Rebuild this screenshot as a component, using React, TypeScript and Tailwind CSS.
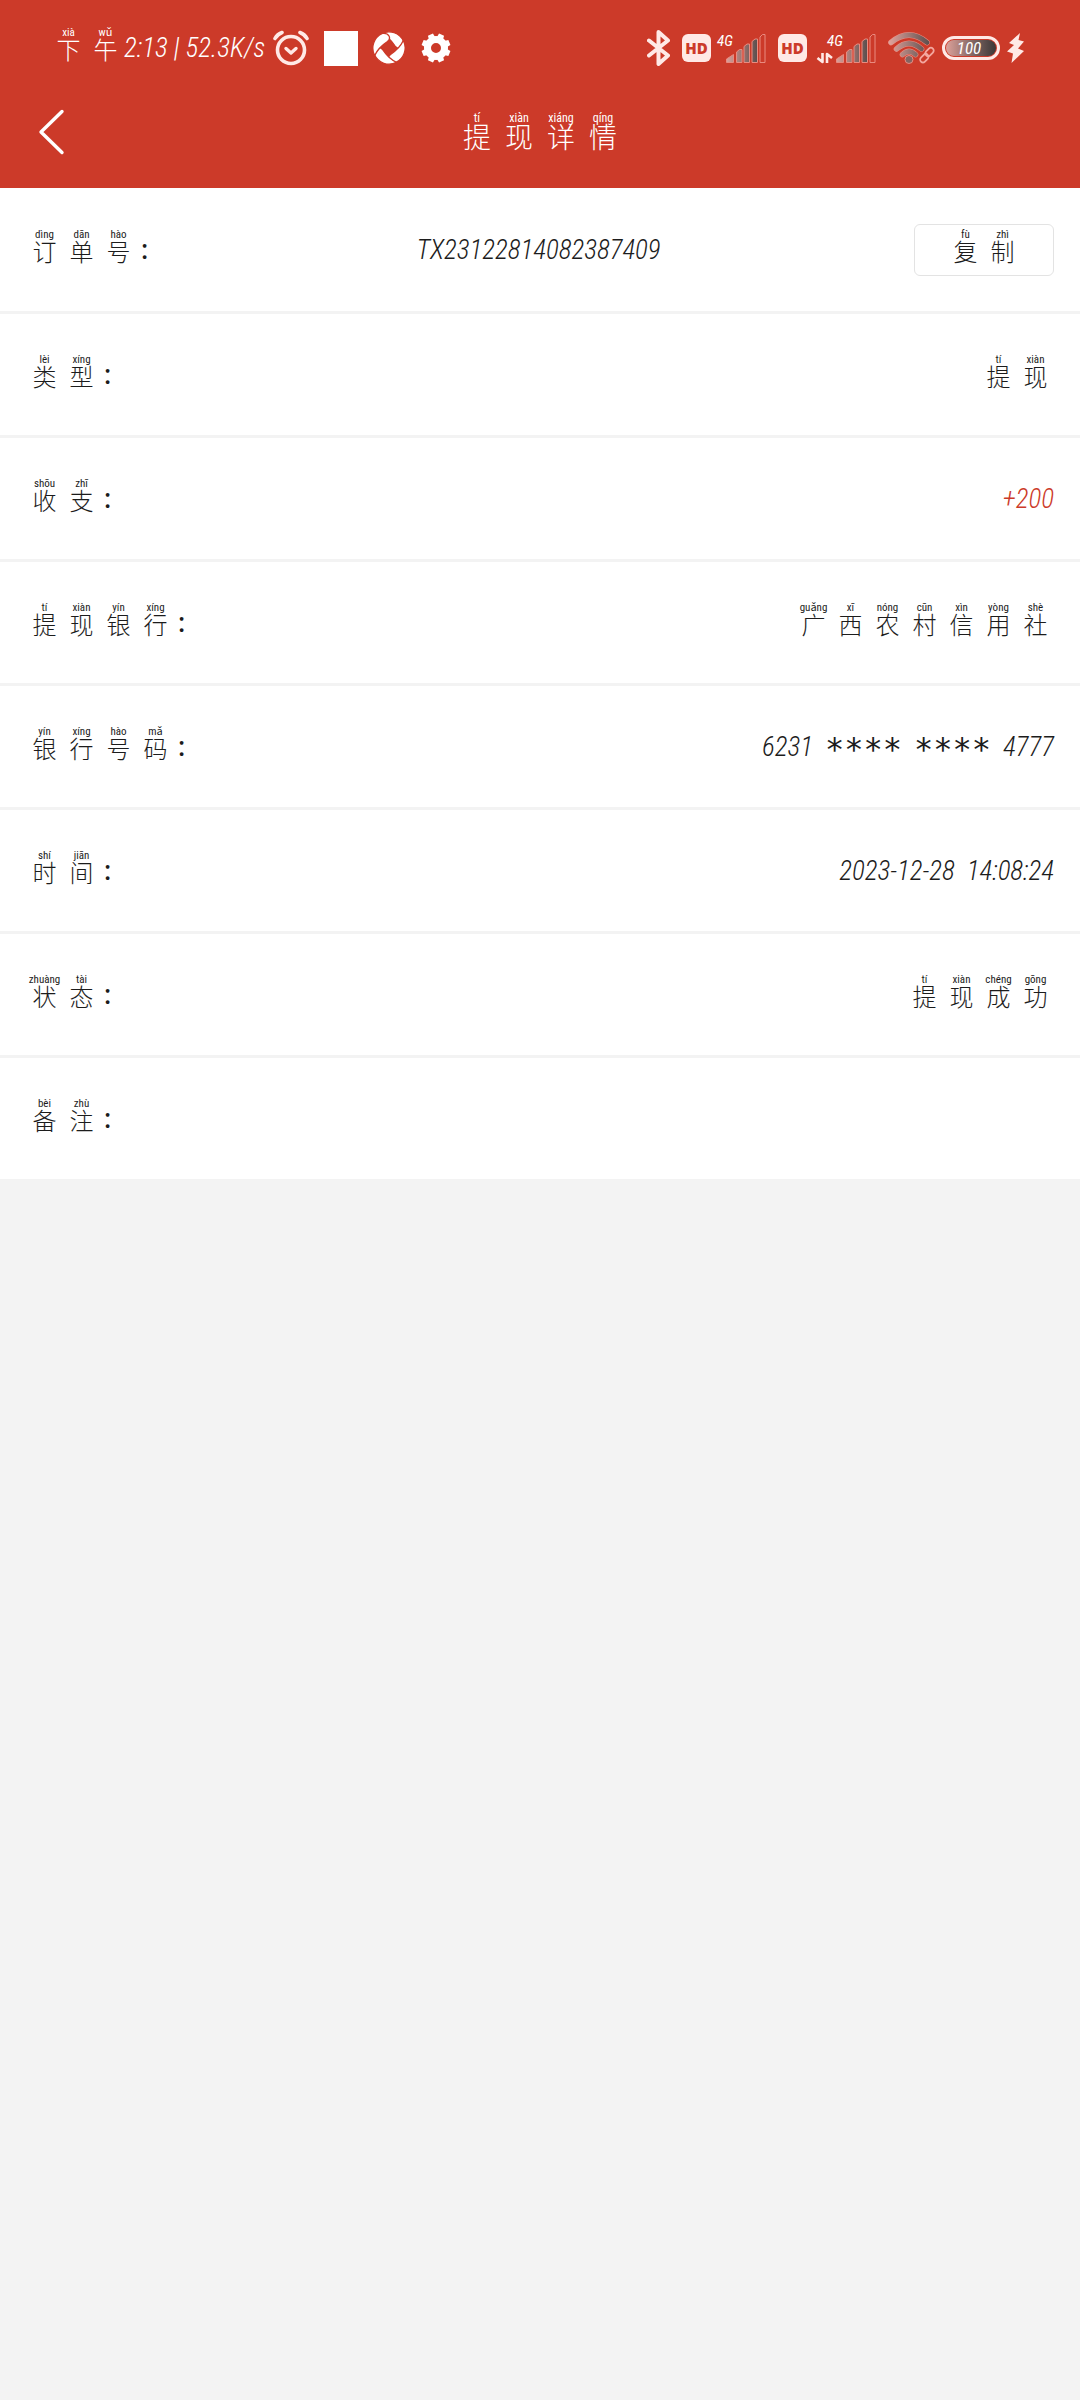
import React from "react";

type Syllable = [char: string, pinyin: string];

interface DetailRow {
  label: Syllable[];
  value?: React.ReactNode;
}

const Pinyin: React.FC<{ text: Syllable[]; large?: boolean }> = ({ text, large }) => (
  <span className="inline-flex pb-1">
    {text.map(([char, pinyin], index) => (
      <ruby key={index} className={`flex flex-col-reverse items-center ${large ? "w-[42px]" : "w-[37px]"}`}>
        <span className={large ? "text-[28px] leading-8" : "text-[24px] leading-[26px]"}>{char}</span>
        <rt className={`block leading-[10px] font-normal ${large ? "text-[12px]" : "text-[11px]"}`}>{pinyin}</rt>
      </ruby>
    ))}
  </span>
);

const AlarmIcon: React.FC = () => (
  <svg width="36" height="36" viewBox="0 0 36 36" fill="none" stroke="#ffe9e6" strokeLinecap="round" strokeLinejoin="round">
    <circle cx="18" cy="20" r="13.5" strokeWidth="3.6" />
    <path d="M13 18.5l5 4.5 5-4.5" strokeWidth="3.4" />
    <path d="M2 8.5Q4 4.5 9 2.5M34 8.5Q32 4.5 27 2.5" strokeWidth="3.6" />
  </svg>
);

const SwirlIcon: React.FC = () => (
  <svg width="32" height="34" viewBox="0 0 34 34" fill="#fff" stroke="#cc3a29" strokeWidth="1.4">
    {[0, 90, 180, 270].map((angle) => (
      <path key={angle} d="M9 1.8A17 17 0 0 1 32.5 10C33.5 17 27 20 23.5 15C20.5 10.5 17 5.5 9 1.8Z" transform={`rotate(${angle} 17 17)`} />
    ))}
  </svg>
);

const GearIcon: React.FC = () => (
  <svg width="32" height="32" viewBox="0 0 32 32">
    <circle cx="16" cy="16" r="8.5" fill="none" stroke="#fff" strokeWidth="7" />
    {[22.5, 67.5, 112.5, 157.5, 202.5, 247.5, 292.5, 337.5].map((angle) => (
      <path key={angle} d="M12.5 7L13.3 1.5H18.7L19.5 7Z" fill="#fff" transform={`rotate(${angle} 16 16)`} />
    ))}
  </svg>
);

const BluetoothIcon: React.FC = () => (
  <svg width="23" height="36" viewBox="0 0 23 36" fill="none" stroke="#ffe9e6" strokeWidth="4" strokeLinecap="round" strokeLinejoin="round">
    <path d="M2 10.5L21 25.5L11.5 34V2L21 10.5L2 25.5" />
  </svg>
);

const HdIcon: React.FC = () => (
  <span className="flex h-[28px] w-[29px] items-center justify-center rounded-md bg-[#ffe9e6] font-['Open_Sans',sans-serif] text-[15px] leading-none font-extrabold text-[#cc3a29]">
    HD
  </span>
);

const SignalIcon: React.FC<{ id: string; transfer?: boolean }> = ({ id, transfer }) => {
  const left = transfer ? 29 : 15;
  return (
    <svg width={transfer ? 69 : 55} height="32" viewBox={transfer ? "0 0 69 32" : "0 0 55 32"}>
      <defs>
        <linearGradient id={id} gradientUnits="userSpaceOnUse" x1="0" y1="0" x2="32" y2="0">
          <stop offset="0" stopColor="#dda19a" />
          <stop offset="1" stopColor="#5a4c4b" />
        </linearGradient>
      </defs>
      <text x={transfer ? 20 : 6} y="14" fill="#fff" className="font-['Roboto_Condensed',Roboto,sans-serif] text-[15px] font-normal italic">
        4G
      </text>
      {transfer && (
        <g fill="none" stroke="#ffe9e6" strokeWidth="2.6" strokeLinejoin="round">
          <path d="M15.5 21V30L10.5 26M20 31V22L25 26" />
        </g>
      )}
      <g transform={`translate(${left} 0)`} fill={`url(#${id})`} stroke="#e98b80">
        <path d="M0.5 30.5V27L7.5 22.5V30.5Z" />
        <path d="M10.5 30.5V20l3-2.500h2.5v13z" />
        <path d="M18 30.5V14.5l3-2.500h2.5v18.5z" />
        <path d="M26 30.5V9.5l3-2.500h2.5v23.5z" />
        <path d="M34 30.5V5l2.5-2.500H39V30.5Z" fill="none" />
      </g>
    </svg>
  );
};

const WifiIcon: React.FC = () => (
  <svg width="47" height="32" viewBox="0 0 47 32" fill="none">
    <defs>
      <linearGradient id="wifi" gradientUnits="userSpaceOnUse" x1="2" y1="0" x2="42" y2="0">
        <stop offset="0" stopColor="#dda19a" />
        <stop offset="1" stopColor="#5a4c4b" />
      </linearGradient>
    </defs>
    {["#e98b80", "url(#wifi)"].map((stroke, index) => (
      <g key={stroke} stroke={stroke} strokeWidth={index === 0 ? 5.6 : 4.6} strokeLinecap="round">
        <path d="M3 10.5Q21 -4.5 39 10.5" />
        <path d="M8.5 17Q21 6 33.5 17" />
        <path d="M14.5 22.5Q21 16.5 27.5 22.5" />
      </g>
    ))}
    <circle cx="21" cy="27.5" r="4" fill="#836562" stroke="#e98b80" />
    <g stroke="#f3a79f" strokeWidth="1.8">
      <rect x="-5" y="-2.8" width="9.5" height="5.6" rx="2.8" transform="translate(36.5 26) rotate(-45)" />
      <rect x="-4" y="-2.8" width="9.5" height="5.6" rx="2.8" transform="translate(41 20.5) rotate(-45)" />
    </g>
  </svg>
);

const Battery: React.FC = () => (
  <span className="flex h-6 w-[58px] rounded-full border-3 border-[#ffe9e6] p-px">
    <span className="flex flex-1 items-center justify-center rounded-full bg-linear-to-r from-[#dda19a] to-[#3b3838] pr-1 text-[17px] leading-none font-normal italic">
      100
    </span>
  </span>
);

const BoltIcon: React.FC = () => (
  <svg width="17" height="30" viewBox="0 0 17 30" fill="#ffe9e6">
    <path d="M13 0L2 10L7 12L0 18.5L6 20.5L4.5 30L17 18L11 15.5L17 8.5L11.5 7Z" />
  </svg>
);

const StatusBar: React.FC = () => (
  <div className="flex h-24 items-center justify-between pr-14 pl-[50px]">
    <div className="flex items-center gap-[15px]">
      <div className="flex items-center">
        <Pinyin text={[["下", "xià"], ["午", "wǔ"]]} />
        <span className="w-[134px] text-[27px] leading-8 whitespace-nowrap italic">2:13 | 52.3K/s</span>
      </div>
      <AlarmIcon />
      <span className="h-[35px] w-[34px] bg-white" />
      <SwirlIcon />
      <GearIcon />
    </div>
    <div className="flex items-center gap-3">
      <BluetoothIcon />
      <div className="flex items-center">
        <HdIcon />
        <SignalIcon id="sim1" />
      </div>
      <div className="flex items-center">
        <HdIcon />
        <SignalIcon id="sim2" transfer />
      </div>
      <div className="flex items-center gap-[7px]">
        <WifiIcon />
        <Battery />
        <BoltIcon />
      </div>
    </div>
  </div>
);

const rows: DetailRow[] = [
  { label: [["类", "lèi"], ["型", "xíng"]], value: <Pinyin text={[["提", "tí"], ["现", "xiàn"]]} /> },
  { label: [["收", "shōu"], ["支", "zhī"]], value: <span className="text-[#cc3a29] italic">+200</span> },
  {
    label: [["提", "tí"], ["现", "xiàn"], ["银", "yín"], ["行", "xíng"]],
    value: (
      <Pinyin text={[["广", "guǎng"], ["西", "xī"], ["农", "nóng"], ["村", "cūn"], ["信", "xìn"], ["用", "yòng"], ["社", "shè"]]} />
    ),
  },
  {
    label: [["银", "yín"], ["行", "xíng"], ["号", "hào"], ["码", "mǎ"]],
    value: (
      <span className="flex items-center gap-3 italic">
        <span>6231</span>
        <span className="pt-1 font-['DejaVu_Sans_Mono',monospace] text-[32px] not-italic">****</span>
        <span className="pt-1 font-['DejaVu_Sans_Mono',monospace] text-[32px] not-italic">****</span>
        <span>4777</span>
      </span>
    ),
  },
  {
    label: [["时", "shí"], ["间", "jiān"]],
    value: (
      <span className="flex gap-3 italic">
        <span>2023-12-28</span>
        <span>14:08:24</span>
      </span>
    ),
  },
  {
    label: [["状", "zhuàng"], ["态", "tài"]],
    value: <Pinyin text={[["提", "tí"], ["现", "xiàn"], ["成", "chéng"], ["功", "gōng"]]} />,
  },
  { label: [["备", "bèi"], ["注", "zhù"]] },
];

const Label: React.FC<{ text: Syllable[] }> = ({ text }) => (
  <dt className="flex items-center">
    <Pinyin text={text} />
    <span className="w-[26px] pl-1 font-medium">:</span>
  </dt>
);

export default function App() {
  return (
    <div className="min-h-screen bg-[#f3f3f3] font-['Roboto_Condensed',Roboto,'Noto_Sans_CJK_SC',sans-serif] font-light text-[#1c1c1c]">
      <header className="bg-[#cc3a29] pb-5 text-white">
        <StatusBar />
        <nav className="grid h-[72px] grid-cols-[1fr_auto_1fr] items-center">
          <button type="button" aria-label="返回" className="w-fit pl-[38px]">
            <svg width="27" height="46" viewBox="0 0 27 46" fill="none" stroke="#fff" strokeWidth="3.4" strokeLinecap="round" strokeLinejoin="round">
              <path d="M24 2.5L3 23L24 43.5" />
            </svg>
          </button>
          <h1>
            <Pinyin large text={[["提", "tí"], ["现", "xiàn"], ["详", "xiáng"], ["情", "qíng"]]} />
          </h1>
        </nav>
      </header>

      <dl className="text-[27px] leading-8">
        <div className="flex h-[126px] items-center justify-between border-b-3 border-[#f3f3f3] bg-white px-[26px]">
          <Label text={[["订", "dìng"], ["单", "dān"], ["号", "hào"]]} />
          <dd className="italic">TX23122814082387409</dd>
          <dd className="flex">
            <button type="button" className="flex h-[52px] w-[140px] items-center justify-center rounded-md border border-[#e3e3e3]">
              <Pinyin text={[["复", "fù"], ["制", "zhì"]]} />
            </button>
          </dd>
        </div>
        {rows.map((row, index) => (
          <div
            key={index}
            className="flex h-[124px] items-center justify-between border-b-3 border-[#f3f3f3] bg-white px-[26px]"
          >
            <Label text={row.label} />
            <dd className="flex">{row.value}</dd>
          </div>
        ))}
      </dl>
    </div>
  );
}
